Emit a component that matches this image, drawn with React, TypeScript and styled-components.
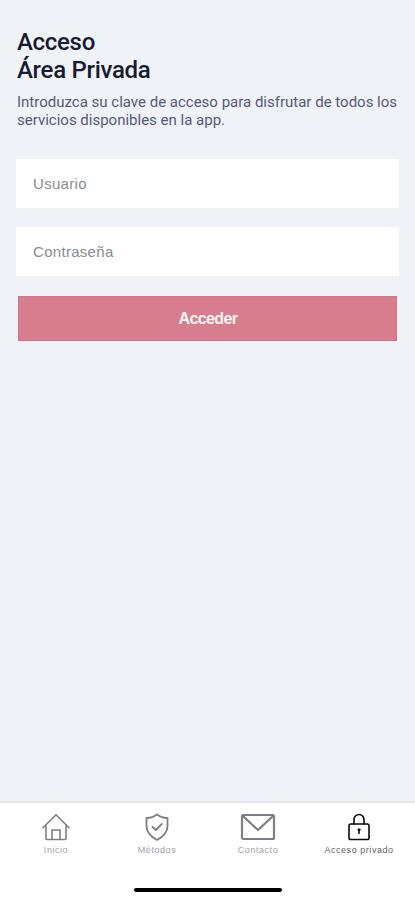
import React from "react";
import styled, { createGlobalStyle } from "styled-components";

const GlobalStyle = createGlobalStyle`
  * { box-sizing: border-box; }
  html, body { margin: 0; padding: 0; background: #eff3f7; }
`;

const Screen = styled.div`
  display: flex;
  flex-direction: column;
  width: 100%;
  height: 900px;
  overflow: hidden;
  background: #eff3f7;
`;

const Content = styled.main`
  flex: 1;
  padding: 28px 16px 0 16px;
`;

const Title = styled.h1`
  margin: 0 0 0 1px;
  font: 500 24px/28px Roboto, sans-serif;
  letter-spacing: -0.3px;
  color: #171a31;
`;

const Intro = styled.p`
  margin: 9px 0 0 1px;
  font: 400 15px/18px Roboto, sans-serif;
  letter-spacing: 0;
  color: #555979;
  white-space: nowrap;
`;

const Form = styled.form`
  display: flex;
  flex-direction: column;
  gap: 19px;
  margin-top: 30px;
`;

const Field = styled.input`
  display: block;
  width: 383px;
  height: 49px;
  padding: 0 16px 0 17px;
  border: 0;
  border-radius: 0;
  outline: 0;
  background: #fff;
  font: 400 15px "Liberation Sans", Arial, sans-serif;
  letter-spacing: 0.3px;
  color: #333;
  &::placeholder { color: #8a8b8e; opacity: 1; }
`;

const SubmitButton = styled.button`
  width: 379px;
  height: 45px;
  margin: 1px 0 0 2px;
  padding: 0 0 0 1px;
  border: 1px solid #d37489;
  background: #d77d8e;
  font: 700 16px "Liberation Sans", Arial, sans-serif;
  letter-spacing: -0.6px;
  color: #fff8f9;
`;

const BottomBar = styled.footer`
  height: 99px;
  border-top: 2px solid #e4e7ea;
  background: #fff;
`;

const Tabs = styled.nav`
  display: grid;
  grid-template-columns: repeat(4, 101px);
  justify-content: center;
  height: 85px;
  padding-top: 9px;
`;

const Tab = styled.a<{ $active?: boolean }>`
  display: flex;
  flex-direction: column;
  align-items: center;
  color: ${(p) => (p.$active ? "#090a0e" : "#7d7f88")};
  svg { display: block; fill: none; stroke: currentColor; stroke-linejoin: round; stroke-linecap: round; }
`;

const TabLabel = styled.span<{ $active?: boolean }>`
  margin-top: 2px;
  font: 400 9px/12px "Liberation Sans", Arial, sans-serif;
  letter-spacing: 0.55px;
  color: ${(p) => (p.$active ? "#606166" : "#a0a1a5")};
  white-space: nowrap;
`;

const HomeIndicator = styled.div`
  width: 148px;
  height: 4px;
  margin: 0 auto;
  border-radius: 2px;
  background: #000;
`;

const HomeIcon = () => (
  <svg width="30" height="30" viewBox="0 0 30 30" strokeWidth="1.6">
    <path d="M2 15.800 15 2.800l13 13M5 13.500v13q0 1 1 1h18q1 0 1-1v-13" />
    <path d="M11 27v-9h8v9" />
  </svg>
);

const ShieldIcon = () => (
  <svg width="30" height="30" viewBox="0 0 30 30" strokeWidth="1.8">
    <path d="M15 2.500C12 4.800 8 6 4.500 6v8c0 6.500 4 10.500 10.500 14 6.500-3.500 10.500-7.500 10.500-14V6C22 6 18 4.800 15 2.500Z" />
    <path d="m10.500 14.800 3.300 3.200 6-6" />
  </svg>
);

const MailIcon = () => (
  <svg width="36" height="30" viewBox="0 0 36 30" strokeWidth="2.200">
    <rect x="2" y="3" width="32" height="24" rx="1.500" />
    <path d="m3 4 15 14L33 4" />
  </svg>
);

const LockIcon = () => (
  <svg width="30" height="30" viewBox="0 0 30 30" strokeWidth="1.600">
    <rect x="5" y="12" width="20" height="15.500" rx="1.800" />
    <path d="M10 12V7.500a5 5 0 0 1 10 0V12" />
    <circle cx="15" cy="17.800" r="1.100" fill="currentColor" strokeWidth="0.800" />
    <path d="M15 18.500v3" />
  </svg>
);

export default function App() {
  return (
    <>
      <GlobalStyle />
      <Screen>
        <Content>
          <Title>Acceso<br />Área Privada</Title>
          <Intro>
            Introduzca su clave de acceso para disfrutar de todos los<br />
            servicios disponibles en la app.
          </Intro>
          <Form onSubmit={(e) => e.preventDefault()}>
            <Field placeholder="Usuario" aria-label="Usuario" />
            <Field type="password" placeholder="Contraseña" aria-label="Contraseña" />
            <SubmitButton type="submit">Acceder</SubmitButton>
          </Form>
        </Content>
        <BottomBar>
          <Tabs>
            <Tab><HomeIcon /><TabLabel>Inicio</TabLabel></Tab>
            <Tab><ShieldIcon /><TabLabel>Métodos</TabLabel></Tab>
            <Tab><MailIcon /><TabLabel>Contacto</TabLabel></Tab>
            <Tab $active><LockIcon /><TabLabel $active>Acceso privado</TabLabel></Tab>
          </Tabs>
          <HomeIndicator />
        </BottomBar>
      </Screen>
    </>
  );
}
